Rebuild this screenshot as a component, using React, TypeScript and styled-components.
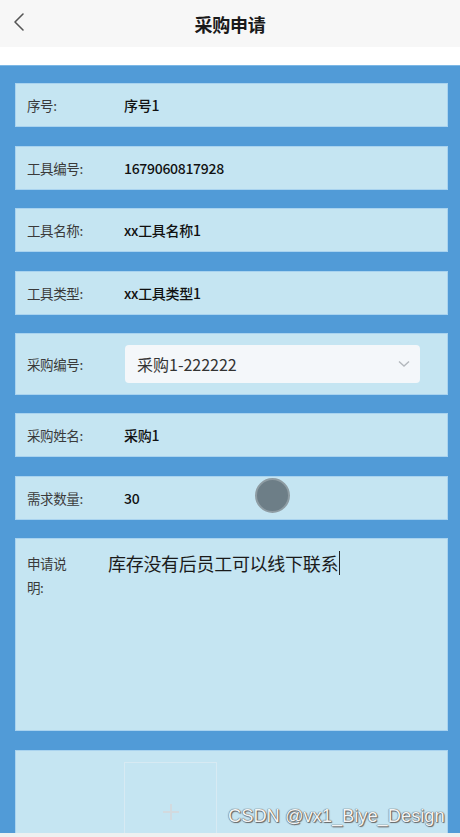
import React from 'react';
import styled, { createGlobalStyle } from 'styled-components';

const GlobalStyle = createGlobalStyle`
  html, body {
    margin: 0;
    padding: 0;
    background: #ffffff;
    font-family: "Noto Sans CJK SC", "Noto Sans", sans-serif;
  }
  * { box-sizing: border-box; }
`;

const Page = styled.div`
  width: 460px;
  height: 837px;
  overflow: hidden;
  position: relative;
  display: flex;
  flex-direction: column;
  background: #ffffff;
`;

const NavBar = styled.header`
  height: 47px;
  flex: none;
  background: #f7f7f7;
  display: flex;
  align-items: center;
  justify-content: center;
  position: relative;
`;

const BackButton = styled.div`
  position: absolute;
  left: 11px;
  top: 11px;
  width: 16px;
  height: 22px;
  display: flex;
  align-items: center;
  justify-content: center;
`;

const Title = styled.h1`
  margin: 0;
  font-size: 18px;
  font-weight: 700;
  color: #1a1a1a;
  letter-spacing: -0.3px;
`;

const Spacer = styled.div`
  height: 18px;
  flex: none;
`;

const Form = styled.main`
  flex: 1;
  background: #519bd7;
  border-top: 1px solid #7cb8e6;
  padding: 17px 12px 0 15px;
  display: flex;
  flex-direction: column;
  gap: 18.5px;
`;

const Row = styled.div<{ $h?: number; $top?: boolean }>`
  height: ${(p) => p.$h ?? 44}px;
  flex: none;
  background: #c5e5f2;
  border: 1px solid #a9d3ef;
  display: flex;
  align-items: ${(p) => (p.$top ? 'flex-start' : 'center')};
  padding: ${(p) => (p.$top ? '12px 0 0 11px' : '0 0 0 11px')};
  position: relative;
`;

const Label = styled.span<{ $w?: number }>`
  width: ${(p) => p.$w ?? 97}px;
  flex: none;
  font-size: 13.5px;
  line-height: 24px;
  color: #3a3a3a;
  letter-spacing: -0.4px;
`;

const Value = styled.span`
  font-size: 14px;
  color: #111;
  font-weight: 500;
  letter-spacing: -0.3px;
`;

const Select = styled.div`
  width: 295px;
  height: 38px;
  background: #f4f7fa;
  border-radius: 4px;
  display: flex;
  align-items: center;
  justify-content: space-between;
  padding: 0 10px 0 12px;
  font-size: 16px;
  color: #333;
  margin-left: 1px;
`;

const TextValue = styled.span`
  margin-left: 33px;
  font-size: 18px;
  line-height: 24px;
  color: #1a1a1a;
  letter-spacing: -0.3px;
  border-right: 1px solid #222;
  padding-right: 1px;
`;

const Touch = styled.div`
  position: absolute;
  left: 239px;
  top: 1px;
  width: 35px;
  height: 35px;
  border-radius: 50%;
  background: #6d7e87;
  border: 2px solid #8e9ca3;
  filter: blur(0.6px);
`;

const UploadRow = styled(Row)`
  padding: 0;
`;

const Upload = styled.div`
  flex: none;
  width: 93px;
  height: 100px;
  margin-left: 108px;
  margin-top: 11px;
  border: 1.5px solid #d7eaf3;
  display: flex;
  align-items: center;
  justify-content: center;
`;

const BottomStrip = styled.div`
  position: absolute;
  left: 0;
  right: 0;
  bottom: 0;
  height: 4px;
  background: #eef0f0;
`;

const Watermark = styled.div`
  position: absolute;
  left: 228px;
  top: 805px;
  font-family: "Liberation Sans", Arial, sans-serif;
  font-size: 18.3px;
  color: #f4f4f4;
  text-shadow: 0 0 1px #555, 0 0 1px #555, 1px 1px 1px #666;
`;

const rows: [string, string][] = [
  ['序号:', '序号1'],
  ['工具编号:', '1679060817928'],
  ['工具名称:', 'xx工具名称1'],
  ['工具类型:', 'xx工具类型1'],
];

export default function App() {
  return (
    <Page>
      <GlobalStyle />
      <NavBar>
        <BackButton>
          <svg width="12" height="20" viewBox="0 0 12 20">
            <path d="M10 2 L2 10 L10 18" fill="none" stroke="#555" strokeWidth="1.6" strokeLinecap="round" strokeLinejoin="round" />
          </svg>
        </BackButton>
        <Title>采购申请</Title>
      </NavBar>
      <Spacer />
      <Form>
        {rows.map(([l, v]) => (
          <Row key={l}>
            <Label>{l}</Label>
            <Value>{v}</Value>
          </Row>
        ))}
        <Row $h={61.5}>
          <Label>采购编号:</Label>
          <Select>
            <span>采购1-222222</span>
            <svg width="12" height="8" viewBox="0 0 12 8">
              <path d="M1 1.5 L6 6 L11 1.5" fill="none" stroke="#b3b8bd" strokeWidth="1.4" />
            </svg>
          </Select>
        </Row>
        <Row>
          <Label>采购姓名:</Label>
          <Value>采购1</Value>
        </Row>
        <Row>
          <Label>需求数量:</Label>
          <Value>30</Value>
          <Touch />
        </Row>
        <Row $h={193} $top>
          <Label $w={48}>申请说明:</Label>
          <TextValue>库存没有后员工可以线下联系</TextValue>
        </Row>
        <UploadRow $h={140} $top>
          <Upload>
            <svg width="16" height="16" viewBox="0 0 16 16">
              <path d="M8 0 V16 M0 8 H16" stroke="#d2dadf" strokeWidth="2" />
            </svg>
          </Upload>
        </UploadRow>
      </Form>
      <Watermark>CSDN @vx1_Biye_Design</Watermark>
      <BottomStrip />
    </Page>
  );
}
